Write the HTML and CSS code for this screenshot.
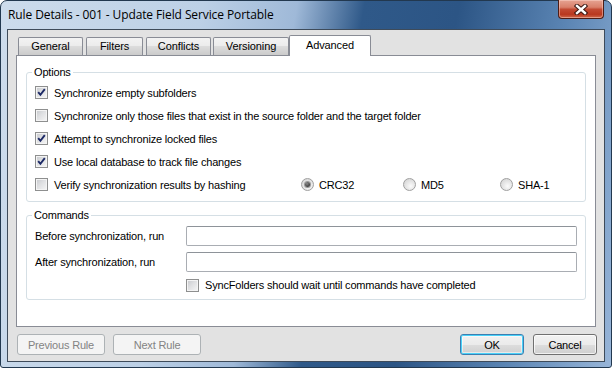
FILE: index.html
```html
<!DOCTYPE html>
<html>
<head>
<meta charset="utf-8">
<title>Rule Details</title>
<link rel="stylesheet" href="styles.css">
</head>
<body>
<div class="window">
  <div class="titlebar">
    <div class="title">Rule Details - 001 - Update Field Service Portable</div>
    <div class="close">
      <svg width="14" height="11" viewBox="0 0 14 11">
        <path d="M3 2 L11 9 M11 2 L3 9" stroke="#3a1712" stroke-width="4.4" stroke-linecap="square" fill="none"/>
        <path d="M3 2 L11 9 M11 2 L3 9" stroke="#ffffff" stroke-width="2.4" stroke-linecap="square" fill="none"/>
      </svg>
    </div>
  </div>
  <div class="client">
    <div class="tabs">
      <div class="tab t-general">General</div>
      <div class="tab t-filters">Filters</div>
      <div class="tab t-conflicts">Conflicts</div>
      <div class="tab t-versioning">Versioning</div>
      <div class="tab active t-advanced">Advanced</div>
    </div>
    <div class="panel">
      <fieldset class="group options">
        <legend>Options</legend>
        <div class="rows">
          <div class="row"><span class="cb checked"><svg width="11" height="11" viewBox="0 0 11 11"><path d="M2.2 5.2 L4.4 7.8 L8.8 2.2" stroke="#1c2966" stroke-width="1.9" fill="none"/></svg></span>Synchronize empty subfolders</div>
          <div class="row"><span class="cb"></span>Synchronize only those files that exist in the source folder and the target folder</div>
          <div class="row"><span class="cb checked"><svg width="11" height="11" viewBox="0 0 11 11"><path d="M2.2 5.2 L4.4 7.8 L8.8 2.2" stroke="#1c2966" stroke-width="1.9" fill="none"/></svg></span>Attempt to synchronize locked files</div>
          <div class="row"><span class="cb checked"><svg width="11" height="11" viewBox="0 0 11 11"><path d="M2.2 5.2 L4.4 7.8 L8.8 2.2" stroke="#1c2966" stroke-width="1.9" fill="none"/></svg></span>Use local database to track file changes</div>
          <div class="row hash-row">
            <div class="hash-label"><span class="cb"></span>Verify synchronization results by hashing</div>
            <div class="radio-item"><span class="rb on"></span>CRC32</div>
            <div class="radio-item"><span class="rb"></span>MD5</div>
            <div class="radio-item"><span class="rb"></span>SHA-1</div>
          </div>
        </div>
      </fieldset>
      <fieldset class="group commands">
        <legend>Commands</legend>
        <div class="cmd-grid">
          <div class="cmd-label">Before synchronization, run</div>
          <div class="input"></div>
          <div class="cmd-label">After synchronization, run</div>
          <div class="input"></div>
          <div></div>
          <div class="wait-row"><span class="cb"></span>SyncFolders should wait until commands have completed</div>
        </div>
      </fieldset>
    </div>
    <div class="buttons">
      <div class="btn-group">
        <div class="btn disabled wide">Previous Rule</div>
        <div class="btn disabled wide">Next Rule</div>
      </div>
      <div class="btn-group right">
        <div class="btn default narrow">OK</div>
        <div class="btn narrow">Cancel</div>
      </div>
    </div>
  </div>
</div>
</body>
</html>
```
FILE: styles.css
```css
* { box-sizing: border-box; }
html, body { margin: 0; padding: 0; }
body {
  width: 612px;
  height: 368px;
  overflow: hidden;
  background: #ffffff;
  font-family: "Liberation Sans", Arial, sans-serif;
  font-size: 11px;
  letter-spacing: -0.18px;
  color: #000;
}

.window {
  width: 612px;
  height: 368px;
  display: flex;
  flex-direction: column;
  border: 1px solid #22384f;
  border-radius: 7px 7px 3px 3px;
  padding: 0 6px 5px 6px;
  background: linear-gradient(100deg, #cddcec 0%, #bcd0e6 30%, #9fb9d8 44%, #2f5989 54%, #2c5585 68%, #5a84b3 84%, #84a6cd 95%, #98b5d8 100%);
}

.titlebar {
  height: 28px;
  display: flex;
  justify-content: space-between;
  align-items: center;
  flex: none;
}
.title {
  padding-left: 1px;
  font-family: "Open Sans", "Noto Sans", sans-serif;
  font-size: 12px;
  line-height: 16px;
  color: #000;
  letter-spacing: -0.1px;
}
.close {
  align-self: flex-start;
  margin-top: -1px;
  margin-right: 1px;
  width: 46px;
  height: 19px;
  display: flex;
  align-items: center;
  justify-content: center;
  border: 1px solid #4e1d16;
  border-top: none;
  border-radius: 0 0 4px 4px;
  background: linear-gradient(#e6a392 0%, #d9806b 40%, #c24a33 52%, #b9381f 80%, #cf6a4c 100%);
  box-shadow: inset 0 0 0 1px rgba(255, 220, 210, 0.45);
}

.client {
  flex: 1;
  display: flex;
  flex-direction: column;
  border: 1px solid #3e4b5a;
  background: #e2e2e2;
  padding: 5px 8px 0 8px;
}

.tabs {
  height: 20px;
  display: flex;
  align-items: flex-end;
  padding-left: 2px;
  flex: none;
}
.tab {
  height: 18px;
  display: flex;
  align-items: center;
  justify-content: center;
  border: 1px solid #898c95;
  border-bottom: none;
  border-radius: 2px 2px 0 0;
  background: linear-gradient(#f3f3f3 0%, #ececec 45%, #dcdcdc 50%, #cbcbcb 100%);
  padding-bottom: 1px;
  letter-spacing: -0.1px;
}
.t-general { width: 65px; }
.t-filters { width: 57px; margin-left: 3px; }
.t-conflicts { width: 65px; margin-left: 3px; }
.t-versioning { width: 76px; margin-left: 2px; }
.t-advanced { width: 82px; }
.tab.active {
  height: 21px;
  margin-bottom: -1px;
  background: #ffffff;
  position: relative;
  z-index: 1;
  padding-bottom: 3px;
}

.panel {
  height: 272px;
  flex: none;
  border: 1px solid #898c95;
  background: #ffffff;
  padding: 0 9px;
  display: flex;
  flex-direction: column;
}

.group {
  margin: 0;
  min-width: 0;
  border: 1px solid #d5dfe5;
  border-radius: 3px;
  padding: 0 8px 0 5px;
}
.group legend {
  padding: 0 2px;
  line-height: 13px;
}
.options {
  margin-top: 10px;
  padding-top: 2px;
  padding-bottom: 5px;
}
.rows { padding-left: 3px; }
.row {
  height: 23px;
  display: flex;
  align-items: center;
  white-space: nowrap;
}
.hash-row {
  display: grid;
  grid-template-columns: 266px 102px 97px auto;
  align-items: center;
}
.hash-label, .radio-item, .wait-row {
  display: flex;
  align-items: center;
  white-space: nowrap;
}

.cb {
  width: 13px;
  height: 13px;
  flex: none;
  margin-right: 6px;
  border: 1px solid #8e8f8f;
  background: linear-gradient(135deg, #c6c8cc 0%, #dfe0e2 45%, #f6f6f6 100%);
  box-shadow: inset 0 0 0 1px #f4f4f4;
  display: flex;
  align-items: center;
  justify-content: center;
}
.cb svg { display: block; }

.rb {
  width: 13px;
  height: 13px;
  flex: none;
  margin-right: 5px;
  border-radius: 50%;
  border: 1px solid #a0a0a0;
  background: radial-gradient(circle at 60% 65%, #fbfbfb 0%, #e2e2e2 55%, #cfcfcf 100%);
  display: flex;
  align-items: center;
  justify-content: center;
}
.rb.on::after {
  content: "";
  width: 5px;
  height: 5px;
  border-radius: 50%;
  background: radial-gradient(circle at 40% 35%, #8a8a8a 0%, #3c3c3c 70%, #2a2a2a 100%);
  box-shadow: 0 0 0 1px #9a9a9a;
}

.commands {
  margin-top: 7px;
  padding-top: 4px;
  padding-bottom: 8px;
}
.cmd-grid {
  padding-left: 3px;
  display: grid;
  grid-template-columns: 151px 1fr;
  grid-template-rows: 20px 20px 13px;
  row-gap: 6px;
  align-items: center;
}
.cmd-grid .wait-row { margin-top: 1px; }
.input {
  height: 20px;
  background: #ffffff;
  border: 1px solid #a9adb3;
  border-top-color: #8e9399;
  border-radius: 2px;
}

.buttons {
  flex: none;
  display: flex;
  justify-content: space-between;
  padding: 7px 0 0 1px;
}
.btn-group {
  display: flex;
  gap: 8px;
}
.btn-group.right { gap: 9px; margin-right: -1px; }
.btn {
  height: 21px;
  display: flex;
  align-items: center;
  justify-content: center;
  border: 1px solid #707070;
  border-radius: 3px;
  background: linear-gradient(#f2f2f2 0%, #ebebeb 50%, #dddddd 51%, #cfcfcf 100%);
  box-shadow: inset 0 0 0 1px rgba(255, 255, 255, 0.7);
}
.wide { width: 88px; }
.narrow { width: 64px; }
.btn.disabled {
  color: #838383;
  border-color: #adb2b5;
  background: #f4f4f4;
  box-shadow: none;
}
.btn.default {
  border-color: #3c7fb1;
  box-shadow: inset 0 0 0 1px #48d1f9, inset 0 0 0 2px rgba(255, 255, 255, 0.5);
}
```
